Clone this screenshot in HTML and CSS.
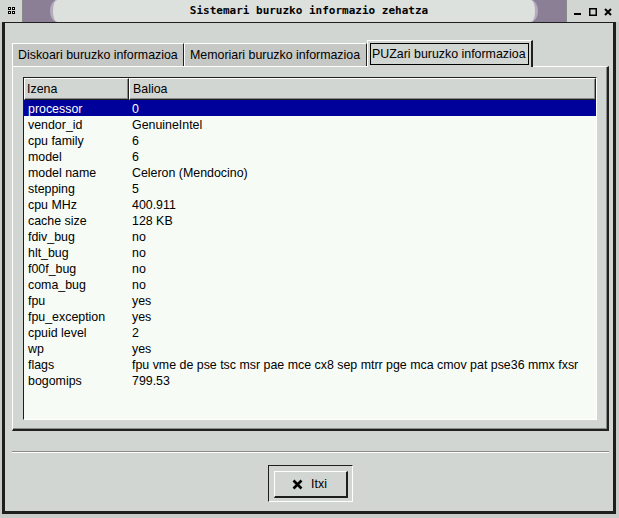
FILE: index.html
```html
<!DOCTYPE html>
<html>
<head>
<meta charset="utf-8">
<link rel="stylesheet" href="styles.css">
</head>
<body>
<div class="window">
  <div class="titlebar">
    <div class="tb-menu">
      <svg width="7" height="7" viewBox="0 0 7 7"><rect x="0" y="0" width="3" height="3" fill="#000"/><rect x="4" y="0" width="3" height="3" fill="#000"/><rect x="0" y="4" width="3" height="3" fill="#000"/><rect x="4" y="4" width="3" height="3" fill="#000"/><rect x="1" y="1" width="1" height="1" fill="#fff"/><rect x="5" y="1" width="1" height="1" fill="#fff"/><rect x="1" y="5" width="1" height="1" fill="#fff"/><rect x="5" y="5" width="1" height="1" fill="#fff"/></svg>
    </div>
    <div class="tb-mid">
      <div class="tb-side"></div>
      <div class="tb-pill"><span class="tb-title">Sistemari buruzko informazio zehatza</span></div>
      <div class="tb-side right"></div>
    </div>
    <div class="tb-buttons">
      <svg width="8" height="8" viewBox="0 0 8 8"><rect x="0" y="5" width="7" height="2" fill="#000"/></svg>
      <svg width="8" height="8" viewBox="0 0 8 8"><rect x="0.75" y="0.75" width="6.5" height="6.5" fill="none" stroke="#000" stroke-width="1.5"/></svg>
      <svg width="8" height="8" viewBox="0 0 8 8"><path d="M1 1 L7 7 M7 1 L1 7" stroke="#000" stroke-width="2"/></svg>
    </div>
  </div>
  <div class="frame">
    <div class="notebook">
      <div class="tabs">
        <div class="tab">Diskoari buruzko informazioa</div>
        <div class="tab">Memoriari buruzko informazioa</div>
        <div class="tab active"><span class="focus">PUZari buruzko informazioa</span></div>
      </div>
      <div class="panel">
        <div class="list">
          <div class="head">
            <div class="hcell c1">Izena</div>
            <div class="hcell c2">Balioa</div>
          </div>
          <div class="rows">
            <div class="row sel"><span class="c1">processor</span><span class="c2">0</span></div>
            <div class="row"><span class="c1">vendor_id</span><span class="c2">GenuineIntel</span></div>
            <div class="row"><span class="c1">cpu family</span><span class="c2">6</span></div>
            <div class="row"><span class="c1">model</span><span class="c2">6</span></div>
            <div class="row"><span class="c1">model name</span><span class="c2">Celeron (Mendocino)</span></div>
            <div class="row"><span class="c1">stepping</span><span class="c2">5</span></div>
            <div class="row"><span class="c1">cpu MHz</span><span class="c2">400.911</span></div>
            <div class="row"><span class="c1">cache size</span><span class="c2">128 KB</span></div>
            <div class="row"><span class="c1">fdiv_bug</span><span class="c2">no</span></div>
            <div class="row"><span class="c1">hlt_bug</span><span class="c2">no</span></div>
            <div class="row"><span class="c1">f00f_bug</span><span class="c2">no</span></div>
            <div class="row"><span class="c1">coma_bug</span><span class="c2">no</span></div>
            <div class="row"><span class="c1">fpu</span><span class="c2">yes</span></div>
            <div class="row"><span class="c1">fpu_exception</span><span class="c2">yes</span></div>
            <div class="row"><span class="c1">cpuid level</span><span class="c2">2</span></div>
            <div class="row"><span class="c1">wp</span><span class="c2">yes</span></div>
            <div class="row"><span class="c1">flags</span><span class="c2">fpu vme de pse tsc msr pae mce cx8 sep mtrr pge mca cmov pat pse36 mmx fxsr</span></div>
            <div class="row"><span class="c1">bogomips</span><span class="c2">799.53</span></div>
          </div>
        </div>
      </div>
    </div>
    <div class="separator"></div>
    <div class="actions">
      <div class="defframe">
        <div class="button">
          <svg width="11" height="11" viewBox="0 0 11 11"><path d="M1.5 1.5 L9.5 9.5 M9.5 1.5 L1.5 9.5" stroke="#000" stroke-width="2.6"/></svg>
          <span>Itxi</span>
        </div>
      </div>
    </div>
  </div>
</div>
</body>
</html>
```
FILE: styles.css
```css
* { box-sizing: border-box; }
html, body { margin: 0; padding: 0; }
body {
  background: #c8ccc8;
  font-family: "Liberation Sans", Arial, sans-serif;
  font-size: 12.4px;
  color: #000;
}
.window {
  width: 619px;
  height: 518px;
  display: flex;
  flex-direction: column;
  background: #c8ccc8;
}
.titlebar {
  height: 22px;
  display: flex;
  background: #d2d6d2;
}
.tb-menu {
  width: 23px;
  flex: none;
  display: flex;
  align-items: center;
  justify-content: center;
  padding-bottom: 1px;
  border-right: 1px solid #8a8a8a;
  background: #d2d6d2;
}
.tb-mid {
  flex: 1;
  background: #8b7f96;
  display: flex;
}
.tb-side {
  width: 27px;
  flex: none;
  background: #8b7f96;
}
.tb-side.right { width: 28px; }
.tb-pill {
  flex: 1;
  background: #dde1dd;
  border-radius: 7px / 11px;
  border-left: 3px solid #b5aabe;
  border-right: 3px solid #b5aabe;
  display: flex;
  align-items: center;
  justify-content: center;
}
.tb-title {
  font-family: "DejaVu Sans Mono", monospace;
  font-weight: bold;
  font-size: 11px;
  padding-bottom: 1px;
  margin-left: 30px;
  white-space: nowrap;
}
.tb-buttons {
  width: 53px;
  flex: none;
  display: flex;
  align-items: center;
  justify-content: center;
  gap: 7px;
  border-left: 1px solid #8a8a8a;
  padding-top: 2px;
}
.frame {
  flex: 1;
  margin: 0 3px 4px 2px;
  border: 3px solid #1e1e1e;
  border-top: 1px solid #1e1e1e;
  background: #d2d6d2;
  padding: 17px 4px 9px 7px;
  display: flex;
  flex-direction: column;
}
.notebook {
  display: flex;
  flex-direction: column;
}
.tabs {
  display: flex;
  align-items: flex-end;
  height: 26px;
}
.tab {
  height: 23px;
  background: #c6c8c6;
  border-left: 1px solid #fff;
  border-top: 1px solid #fff;
  border-right: 1px solid #202020;
  padding: 0 5px 0 5px;
  display: flex;
  align-items: center;
  white-space: nowrap;
}
.tab:first-child { width: 172px; }
.tab:nth-child(2) { width: 183px; }
.tab.active {
  height: 27px;
  margin-bottom: -1px;
  background: #d2d6d2;
  width: 166px;
  padding: 2px 2px 2px 2px;
  border-right: 2px solid #202020;
  position: relative;
  z-index: 1;
}
.focus {
  border: 1px solid #000;
  height: 22px;
  display: flex;
  align-items: center;
  padding: 0 1px 0 1px;
  width: 100%;
}
.panel {
  height: 365px;
  border-top: 1px solid #fff;
  border-left: 1px solid #fff;
  border-right: 2px solid #202020;
  border-bottom: 2px solid #202020;
  box-shadow: inset -1px -1px 0 #8a8a8a;
  padding: 10px 10px 9px 10px;
  display: flex;
}
.list {
  flex: 1;
  border-top: 1px solid #1e1e1e;
  border-left: 1px solid #1e1e1e;
  border-right: 1px solid #fff;
  border-bottom: 1px solid #fff;
  background: #f6fbf6;
  display: flex;
  flex-direction: column;
}
.head {
  display: flex;
  height: 22px;
  background: #d2d6d2;
}
.hcell {
  border-top: 1px solid #fff;
  border-left: 1px solid #fff;
  border-right: 1px solid #1e1e1e;
  border-bottom: 1px solid #1e1e1e;
  box-shadow: inset -1px -1px 0 #8a8a8a;
  display: flex;
  align-items: center;
  padding-left: 2px;
}
.hcell.c1 { width: 105px; }
.hcell.c2 { flex: 1; padding-left: 3px; }
.rows { display: flex; flex-direction: column; }
.row {
  height: 16px;
  display: flex;
  align-items: center;
  white-space: nowrap;
  padding-left: 4px;
  padding-top: 1px;
}
.row .c1 { width: 104px; }
.row.sel { background: #00009a; color: #fff; }
.separator {
  margin-top: 20px;
  height: 2px;
  border-top: 1px solid #8a8a8a;
  border-bottom: 1px solid #fff;
}
.actions {
  display: flex;
  justify-content: center;
  padding-top: 12px;
}
.defframe {
  width: 85px;
  height: 37px;
  border-top: 1px solid #1e1e1e;
  border-left: 1px solid #1e1e1e;
  border-right: 1px solid #fff;
  border-bottom: 1px solid #fff;
  padding: 5px 4px 3px 5px;
  display: flex;
}
.button {
  flex: 1;
  border-top: 1px solid #fff;
  border-left: 1px solid #fff;
  border-right: 2px solid #1e1e1e;
  border-bottom: 2px solid #1e1e1e;
  display: flex;
  align-items: center;
  justify-content: center;
  gap: 8px;
  padding-right: 2px;
}
```
